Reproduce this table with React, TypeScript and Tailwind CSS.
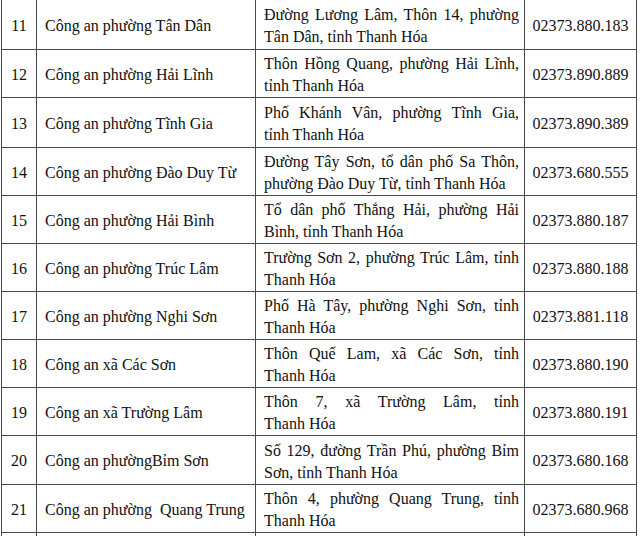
import React from 'react';

type Row = {
  no: string;
  name: string;
  addr: [string, string];
  phone: string;
  h: string;
};

// heights include the 1px bottom border
const rows: Row[] = [
  { no: '11', name: 'Công an phường Tân Dân', addr: ['Đường Lương Lâm, Thôn 14, phường', 'Tân Dân, tỉnh Thanh Hóa'], phone: '02373.880.183', h: 'h-[50px]' },
  { no: '12', name: 'Công an phường Hải Lĩnh', addr: ['Thôn Hồng Quang, phường Hải Lĩnh,', 'tỉnh Thanh Hóa'], phone: '02373.890.889', h: 'h-[48px]' },
  { no: '13', name: 'Công an phường Tĩnh Gia', addr: ['Phố Khánh Vân, phường Tĩnh Gia,', 'tỉnh Thanh Hóa'], phone: '02373.890.389', h: 'h-[50px]' },
  { no: '14', name: 'Công an phường Đào Duy Từ', addr: ['Đường Tây Sơn, tổ dân phố Sa Thôn,', 'phường Đào Duy Từ, tỉnh Thanh Hóa'], phone: '02373.680.555', h: 'h-[48px]' },
  { no: '15', name: 'Công an phường Hải Bình', addr: ['Tổ dân phố Thắng Hải, phường Hải', 'Bình, tỉnh Thanh Hóa'], phone: '02373.880.187', h: 'h-[48px]' },
  { no: '16', name: 'Công an phường Trúc Lâm', addr: ['Trường Sơn 2, phường Trúc Lâm, tỉnh', 'Thanh Hóa'], phone: '02373.880.188', h: 'h-[48px]' },
  { no: '17', name: 'Công an phường Nghi Sơn', addr: ['Phố Hà Tây, phường Nghi Sơn, tỉnh', 'Thanh Hóa'], phone: '02373.881.118', h: 'h-[48px]' },
  { no: '18', name: 'Công an xã Các Sơn', addr: ['Thôn Quế Lam, xã Các Sơn, tỉnh', 'Thanh Hóa'], phone: '02373.880.190', h: 'h-[48px]' },
  { no: '19', name: 'Công an xã Trường Lâm', addr: ['Thôn 7, xã Trường Lâm, tỉnh', 'Thanh Hóa'], phone: '02373.880.191', h: 'h-[48px]' },
  { no: '20', name: 'Công an phườngBỉm Sơn', addr: ['Số 129, đường Trần Phú, phường Bỉm', 'Sơn, tỉnh Thanh Hóa'], phone: '02373.680.168', h: 'h-[49px]' },
  { no: '21', name: 'Công an phường  Quang Trung', addr: ['Thôn 4, phường Quang Trung, tỉnh', 'Thanh Hóa'], phone: '02373.680.968', h: 'h-[48px]' },
];

const cell = 'border-r border-[#4a4a4a] flex items-center';

export default function App() {
  return (
    <div className="w-[640px] h-[536px] overflow-hidden bg-white text-[#111] [font-family:'Liberation_Serif','Times_New_Roman',serif] text-[16px]">
      <div className="ml-[1px] w-[636px] border-l border-[#4a4a4a]">
        {rows.map((r) => (
          <div key={r.no} className={`grid grid-cols-[35px_219px_269px_112px] border-b border-[#4a4a4a] ${r.h}`}>
            <div className={`${cell} justify-center pt-[2px]`}>{r.no}</div>
            <div className={`${cell} pl-[8px] pt-[2px] whitespace-pre`}>{r.name}</div>
            <div className={`${cell} pl-[8px] pr-[5px] pt-[3px]`}>
              <div className="w-full leading-[22px]">
                <div className="text-justify [text-align-last:justify]">{r.addr[0]}</div>
                <div>{r.addr[1]}</div>
              </div>
            </div>
            <div className={`${cell} justify-center pt-[2px]`}>{r.phone}</div>
          </div>
        ))}
        {/* partly visible next row */}
        <div className="grid grid-cols-[35px_219px_269px_112px] h-[48px]">
          <div className={cell}></div>
          <div className={cell}></div>
          <div className={cell}></div>
          <div className={cell}></div>
        </div>
      </div>
    </div>
  );
}
